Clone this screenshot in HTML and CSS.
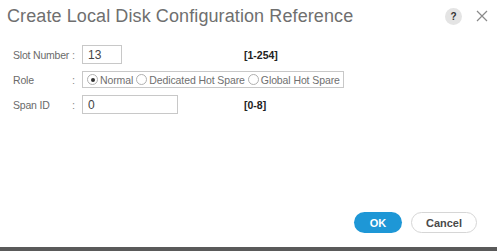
FILE: index.html
```html
<!DOCTYPE html>
<html lang="en">
<head>
    <meta charset="UTF-8">
    <title>Create Local Disk Configuration Reference</title>
    <link rel="stylesheet" href="styles.css">
</head>
<body>
    <div class="dialog">
        <div class="header">
            <h1 class="title">Create Local Disk Configuration Reference</h1>
            <div class="header-icons">
                <span class="help">?</span>
                <svg class="close" width="12" height="12" viewBox="0 0 12 12">
                    <path d="M1 1 L11 11 M11 1 L1 11" stroke="#8a8a8a" stroke-width="1.2" fill="none"/>
                </svg>
            </div>
        </div>

        <div class="form">
            <div class="row">
                <span class="label">Slot Number</span>
                <span class="colon">:</span>
                <input class="field field-short" type="text" value="13">
                <span class="range">[1-254]</span>
            </div>
            <div class="row">
                <span class="label">Role</span>
                <span class="colon">:</span>
                <div class="radio-group">
                    <label class="radio"><span class="dot checked"></span>Normal</label>
                    <label class="radio"><span class="dot"></span>Dedicated Hot Spare</label>
                    <label class="radio"><span class="dot"></span>Global Hot Spare</label>
                </div>
            </div>
            <div class="row">
                <span class="label">Span ID</span>
                <span class="colon">:</span>
                <input class="field field-long" type="text" value="0">
                <span class="range">[0-8]</span>
            </div>
        </div>

        <div class="footer">
            <button class="btn btn-ok">OK</button>
            <button class="btn btn-cancel">Cancel</button>
        </div>
    </div>
</body>
</html>
```

FILE: styles.css
```css
body {
    margin: 0;
    background: #ffffff;
    font-family: 'Liberation Sans', Arial, sans-serif;
    color: #666666;
}

.dialog {
    width: 497px;
    height: 251px;
    box-sizing: border-box;
    border-bottom: 4px solid #5a5a5a;
    display: flex;
    flex-direction: column;
}

.header {
    display: flex;
    align-items: center;
    justify-content: space-between;
    padding: 4px 9px 0 7px;
    height: 24px;
}

.title {
    margin: 0;
    font-size: 18px;
    font-weight: normal;
    color: #6f6f6f;
    letter-spacing: 0.1px;
}

.header-icons {
    display: flex;
    align-items: center;
    gap: 14px;
}

.help {
    width: 17px;
    height: 17px;
    border-radius: 50%;
    background: #e4e4e4;
    color: #333333;
    font-size: 10px;
    font-weight: bold;
    display: flex;
    align-items: center;
    justify-content: center;
}

.form {
    padding: 17px 0 0 13px;
    display: flex;
    flex-direction: column;
    gap: 6px;
}

.row {
    display: flex;
    align-items: center;
    height: 19px;
    font-size: 11px;
    white-space: nowrap;
}

.label {
    width: 59px;
    flex-shrink: 0;
    color: #6a6a6a;
    font-size: 10.5px;
    letter-spacing: -0.2px;
}

.colon {
    width: 10px;
    flex-shrink: 0;
    color: #8a8a8a;
}

.field {
    height: 19px;
    flex-shrink: 0;
    box-sizing: border-box;
    border: 1px solid #c8c8c8;
    padding: 0 5px;
    font-family: inherit;
    font-size: 12px;
    color: #444444;
    outline: none;
}

.field-short {
    width: 40px;
    margin-right: 122px;
}

.field-long {
    width: 96px;
    margin-right: 66px;
}

.range {
    font-weight: bold;
    color: #222222;
    font-size: 10.5px;
}

.radio-group {
    width: 262px;
    height: 17px;
    flex-shrink: 0;
    box-sizing: border-box;
    border: 1px solid #c8c8c8;
    display: flex;
    align-items: center;
    padding-left: 4px;
    gap: 3px;
}

.radio {
    display: flex;
    align-items: center;
    gap: 2px;
    color: #6f6f6f;
    font-size: 10.5px;
    letter-spacing: -0.1px;
}

.dot {
    width: 11px;
    height: 11px;
    box-sizing: border-box;
    border: 1px solid #b0b0b0;
    border-radius: 50%;
    display: flex;
    align-items: center;
    justify-content: center;
}

.dot.checked::after {
    content: "";
    width: 4px;
    height: 4px;
    border-radius: 50%;
    background: #333333;
}

.footer {
    margin-top: auto;
    display: flex;
    justify-content: flex-end;
    gap: 9px;
    padding: 0 20px 14px 0;
}

.btn {
    height: 21px;
    border-radius: 11px;
    font-family: inherit;
    font-size: 11px;
    font-weight: bold;
    cursor: pointer;
}

.btn-ok {
    width: 48px;
    background: #1e97d6;
    border: none;
    color: #ffffff;
}

.btn-cancel {
    width: 66px;
    background: #ffffff;
    border: 1px solid #d6d6d6;
    color: #4a4a4a;
}
```
